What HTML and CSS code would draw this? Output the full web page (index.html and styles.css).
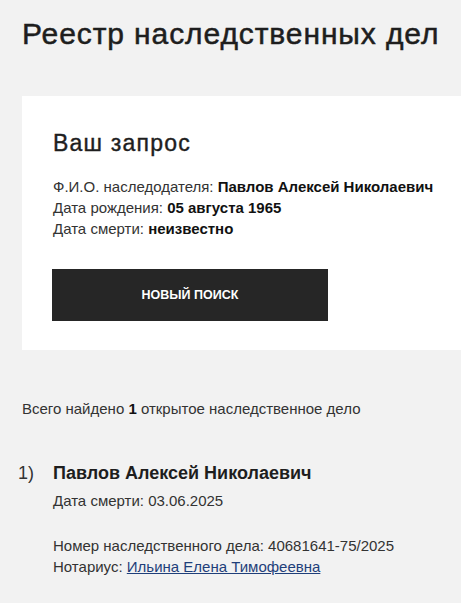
FILE: index.html
```html
<!DOCTYPE html>
<html lang="ru">
<head>
<meta charset="utf-8">
<link rel="stylesheet" href="styles.css">
</head>
<body>
<div class="page">
  <h1 class="title">Реестр наследственных дел</h1>
  <section class="card">
    <h2 class="card-title">Ваш запрос</h2>
    <div class="query">
      <div>Ф.И.О. наследодателя: <b>Павлов Алексей Николаевич</b></div>
      <div>Дата рождения: <b>05 августа 1965</b></div>
      <div>Дата смерти: <b>неизвестно</b></div>
    </div>
    <button class="btn">НОВЫЙ ПОИСК</button>
  </section>
  <p class="summary">Всего найдено <b>1</b> открытое наследственное дело</p>
  <div class="result">
    <div class="num">1)</div>
    <div class="res-body">
      <div class="res-name">Павлов Алексей Николаевич</div>
      <div class="res-line">Дата смерти: 03.06.2025</div>
      <div class="res-info">
        <div>Номер наследственного дела: 40681641-75/2025</div>
        <div>Нотариус: <a href="#" class="link">Ильина Елена Тимофеевна</a></div>
      </div>
    </div>
  </div>
</div>
</body>
</html>
```

FILE: styles.css
```css
html, body {
  margin: 0;
  padding: 0;
  background: #f2f2f2;
  font-family: "Liberation Sans", Arial, sans-serif;
  color: #222;
}
.page {
  padding: 16px 0 0 22px;
  overflow: hidden;
}
.title {
  margin: 0;
  font-size: 30px;
  font-weight: 400;
  line-height: 36px;
  letter-spacing: 0.9px;
  -webkit-text-stroke: 0.5px #1e1e1e;
  color: #1e1e1e;
}
.card {
  background: #fff;
  margin-top: 44px;
  padding: 33px 0 29px 31px;
  height: 192px;
}
.card-title {
  margin: 0;
  font-size: 23px;
  font-weight: 400;
  line-height: 28px;
  letter-spacing: 1.2px;
  -webkit-text-stroke: 0.4px #1e1e1e;
  color: #1e1e1e;
}
.query {
  margin-top: 19px;
  font-size: 15px;
  line-height: 21px;
  color: #333;
}
.query b { color: #111; }
.btn {
  margin-top: 30px;
  margin-left: -1px;
  width: 276px;
  height: 52px;
  background: #262626;
  color: #fff;
  border: 0;
  font-family: "Liberation Sans", Arial, sans-serif;
  font-weight: 700;
  font-size: 12.5px;
  display: block;
}
.summary {
  margin: 48px 0 0 0;
  font-size: 15px;
  line-height: 21px;
  color: #333;
}
.summary b { color: #111; }
.result {
  display: flex;
  margin-top: 43px;
  margin-left: -4px;
}
.num {
  width: 35px;
  font-size: 18px;
  line-height: 22px;
  color: #333;
}
.res-name {
  font-size: 18px;
  font-weight: 700;
  line-height: 22px;
  color: #1e1e1e;
}
.res-line {
  margin-top: 6px;
  font-size: 15px;
  line-height: 21px;
  color: #333;
}
.res-info {
  margin-top: 24px;
  font-size: 15px;
  line-height: 21px;
  color: #333;
}
.link {
  color: #1f3f7a;
  text-decoration: underline;
}
```
